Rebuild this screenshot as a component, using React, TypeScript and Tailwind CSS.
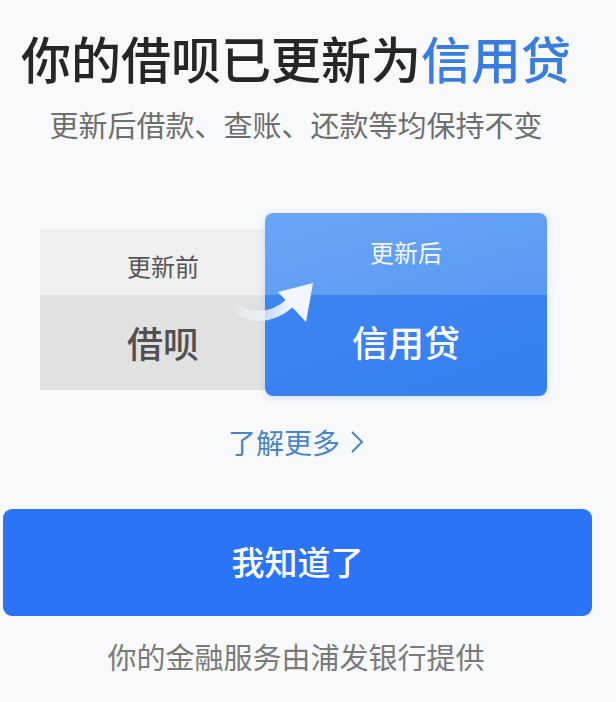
import React from "react";

export default function App() {
  return (
    <div
      className="w-[616px] h-[702px] bg-[#f8f9fb] flex flex-col items-center pr-[24px] overflow-hidden"
      style={{ fontFamily: '"Noto Sans CJK SC", "Noto Sans", sans-serif' }}
    >
      <h1 className="mt-[32px] text-[50px] leading-[50px] font-medium text-[#262626] tracking-[0px] whitespace-nowrap">
        你的借呗已更新为<span className="text-[#3a7ddc]">信用贷</span>
      </h1>
      <p className="mt-[28px] text-[29px] leading-[29px] text-[#6e6e6e] whitespace-nowrap">
        更新后借款、查账、还款等均保持不变
      </p>

      <div className="relative mt-[74px] self-start ml-[40px] flex items-start">
        <div className="mt-[16px] w-[246px] h-[161px] flex flex-col">
          <div className="h-[66px] bg-[#efefef] flex items-center justify-center pt-[8px] text-[24px] leading-[24px] text-[#555555]">
            更新前
          </div>
          <div className="flex-1 bg-[#e1e1e1] flex items-center justify-center pb-[2px] text-[36px] leading-[36px] font-medium text-[#505050]">
            借呗
          </div>
        </div>
        <div className="relative -ml-[21px] w-[282px] h-[183px] rounded-[8px] overflow-hidden flex flex-col shadow-[0_2px_8px_rgba(60,120,230,0.18)]">
          <div className="h-[82px] bg-gradient-to-br from-[#6aa6f7] to-[#5a99f4] flex items-center justify-center pb-[4px] text-[24px] leading-[24px] text-white/95">
            更新后
          </div>
          <div className="flex-1 bg-gradient-to-br from-[#3d85f1] to-[#367ff0] flex items-center justify-center pb-[10px] text-[36px] leading-[36px] font-medium text-white">
            信用贷
          </div>
        </div>
        <svg
          className="absolute left-[186px] top-[62px]"
          width="92"
          height="50"
          viewBox="0 0 92 50"
        >
          <defs>
            <linearGradient id="ag" x1="0" y1="0" x2="1" y2="0">
              <stop offset="0" stopColor="#ffffff" stopOpacity="0" />
              <stop offset="0.45" stopColor="#eef4ff" stopOpacity="0.7" />
              <stop offset="1" stopColor="#f2f7ff" stopOpacity="1" />
            </linearGradient>
          </defs>
          <path
            d="M6 30 C 22 46, 46 44, 64 28"
            fill="none"
            stroke="url(#ag)"
            strokeWidth="10"
            strokeLinecap="round"
          />
          <polygon points="52,17 87,8 80,47" fill="#f2f7ff" />
        </svg>
      </div>

      <div className="mt-[32px] flex items-center text-[28px] leading-[28px] text-[#4a84c6]">
        <span>了解更多</span>
        <svg className="ml-[10px]" width="14" height="24" viewBox="0 0 14 24">
          <path d="M2 2 L12 12 L2 22" fill="none" stroke="#4a84c6" strokeWidth="2" />
        </svg>
      </div>

      <button className="mt-[53px] self-start ml-[3px] w-[589px] h-[107px] rounded-[9px] bg-[#2c74f6] text-white text-[33px] leading-[33px] font-medium flex items-center justify-center pb-[2px]">
        我知道了
      </button>

      <p className="mt-[26px] text-[29px] leading-[29px] text-[#7a7a7a] whitespace-nowrap">
        你的金融服务由浦发银行提供
      </p>
    </div>
  );
}
